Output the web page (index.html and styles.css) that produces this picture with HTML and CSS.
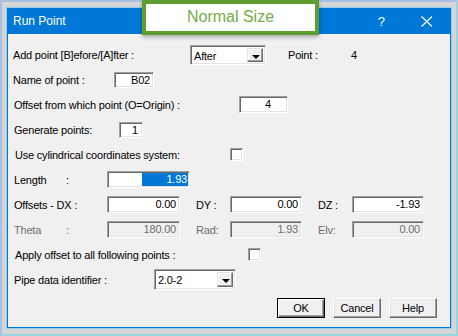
FILE: index.html
```html
<!DOCTYPE html>
<html lang="en">
    <head>
        <meta charset="utf-8">
        <link rel="stylesheet" href="styles.css">
    </head>
    <body>
    <div class="frame">
        <div class="window">
            <div class="titlebar">
                <span class="title">Run Point</span>
                <span class="help-btn">?</span>
                <svg class="close-btn" width="12" height="11" viewBox="0 0 12 11">
                    <path d="M0.5 0.5 L11 10.5 M11 0.5 L0.5 10.5" stroke="#fff" stroke-width="1.2" fill="none"/>
                </svg>
            </div>
            <form class="content">
                <div class="row first">
                    <span class="lbl w-add">Add point [B]efore/[A]fter :</span>
                    <div class="combo w-after"><span class="combo-text">After</span><span class="drop"></span></div>
                    <span class="lbl w-point">Point :</span>
                    <span class="lbl">4</span>
                </div>
                <div class="row first">
                    <span class="lbl w-name">Name of point :</span>
                    <div class="field w-b02 short">B02</div>
                </div>
                <div class="row">
                    <span class="lbl w-offset">Offset from which point (O=Origin) :</span>
                    <div class="field w-four">4</div>
                </div>
                <div class="row">
                    <span class="lbl w-gen">Generate points:</span>
                    <div class="field w-one short">1</div>
                </div>
                <div class="row indent">
                    <span class="lbl w-cyl">Use cylindrical coordinates system:</span>
                    <span class="check"></span>
                </div>
                <div class="row">
                    <span class="lbl w-dx"><span class="word">Length</span>:</span>
                    <div class="field w-len"><span class="sel">1.93</span></div>
                </div>
                <div class="row">
                    <span class="lbl w-dx">Offsets - DX :</span>
                    <div class="field w-num">0.00</div>
                    <span class="lbl w-axis">DY :</span>
                    <div class="field w-num2">0.00</div>
                    <span class="lbl w-axis">DZ :</span>
                    <div class="field w-num2">-1.93</div>
                </div>
                <div class="row off">
                    <span class="lbl w-dx"><span class="word">Theta</span>:</span>
                    <div class="field w-num">180.00</div>
                    <span class="lbl w-axis">Rad:</span>
                    <div class="field w-num2">1.93</div>
                    <span class="lbl w-axis">Elv:</span>
                    <div class="field w-num2">0.00</div>
                </div>
                <div class="row indent">
                    <span class="lbl w-apply">Apply offset to all following points :</span>
                    <span class="check"></span>
                </div>
                <div class="row">
                    <span class="lbl w-pipe">Pipe data identifier :</span>
                    <div class="combo w-pipesel"><span class="combo-text">2.0-2</span><span class="drop"></span></div>
                </div>
                <div class="buttons">
                    <button type="button" class="btn default">OK</button>
                    <button type="button" class="btn">Cancel</button>
                    <button type="button" class="btn">Help</button>
                </div>
            </form>
        </div>
        <div class="badge">Normal Size</div>
    </div>
    </body>
</html>
```

FILE: styles.css
```css
body{
    margin:0;
    font-family:"Liberation Sans", Arial, sans-serif;
}
.frame{
    position:relative;
    width:458px;
    height:336px;
    box-sizing:border-box;
    background:#d6d6d6;
    border:2px solid #a7c1e4;
    border-bottom-color:#9ad3e2;
    border-right-color:#9ad3e2;
    padding:5px 4px;
}
.window{
    margin:1px;
    height:318px;
    border:1px solid #0078d7;
    background:#f0f0f0;
    box-shadow:0 0 0 1px #92cfec;
    display:flex;
    flex-direction:column;
}
.titlebar{
    height:25px;
    background:#0078d7;
    color:#fff;
    display:flex;
    align-items:center;
}
.title{
    font-size:12px;
    margin-left:5px;
    margin-top:-1px;
}
.help-btn{
    font-size:13px;
    margin-left:auto;
    margin-top:-1px;
}
.close-btn{
    margin:0 17px 0 36px;
}
.content{
    margin:0;
    padding:8px 0 0 6px;
    font-size:11px;
    letter-spacing:-0.2px;
    color:#000;
}
.row{
    height:25px;
    display:flex;
    align-items:center;
}
.row.first{
    margin-left:-1px;
}
.row.indent{
    padding-left:1px;
}
.lbl{
    flex:none;
    white-space:nowrap;
}
.word{
    display:inline-block;
    width:52px;
}
.w-add{width:177px;}
.w-point{width:63px;margin-left:22px;}
.w-name{width:101px;}
.w-offset{width:225px;}
.w-gen{width:105px;}
.w-cyl{width:215px;}
.w-dx{width:93px;}
.w-axis{width:34px;margin-left:16px;}
.w-apply{width:233px;}
.w-pipe{width:140px;}

.field{
    box-sizing:border-box;
    height:17px;
    line-height:15px;
    background:#fff;
    border:1px solid;
    border-color:#a0a0a0 #fff #fff #a0a0a0;
    box-shadow:inset 1px 1px #696969, inset -1px -1px #e3e3e3;
    text-align:right;
    padding-right:3px;
    flex:none;
}
.field.short{
    height:16px;
    line-height:14px;
}
.w-b02{width:40px;}
.w-four{width:49px;padding-right:16px;}
.w-one{width:24px;padding-right:4px;}
.w-len{width:83px;padding:1px 1px 1px 0;}
.w-num{width:73px;}
.w-num2{width:72px;}
.sel{
    display:block;
    margin-left:34px;
    height:13px;
    line-height:13px;
    background:#0078d7;
    color:#fff;
    padding-right:1px;
}
.off{
    color:#6d6d6d;
}
.off .field{
    background:#f0f0f0;
    color:#6d6d6d;
}
.check{
    flex:none;
    box-sizing:border-box;
    width:13px;
    height:13px;
    background:#fff;
    border:1px solid;
    border-color:#a0a0a0 #fff #fff #a0a0a0;
    box-shadow:inset 1px 1px #696969, inset -1px -1px #e3e3e3;
}
.combo{
    box-sizing:border-box;
    height:20px;
    background:#fff;
    border:1px solid;
    border-color:#a0a0a0 #fff #fff #a0a0a0;
    box-shadow:inset 1px 1px #696969, inset -1px -1px #e3e3e3;
    display:flex;
    padding:2px;
    flex:none;
}
.w-after{width:76px;}
.w-pipesel{width:82px;height:21px;}
.combo-text{
    flex:1;
    line-height:16px;
    padding-left:1px;
}
.drop{
    width:16px;
    background:#f0f0f0;
    box-sizing:border-box;
    border:1px solid;
    border-color:#e3e3e3 #696969 #696969 #e3e3e3;
    box-shadow:inset -1px -1px #a0a0a0, inset 1px 1px #fff;
    position:relative;
}
.drop::after{
    content:"";
    position:absolute;
    left:4px;
    top:6px;
    border:4px solid transparent;
    border-top:4px solid #000;
    border-bottom:0;
}
.buttons{
    display:flex;
    gap:8px;
    margin:6px 0 0 263px;
}
.btn{
    width:48px;
    height:20px;
    padding:0;
    font-family:"Liberation Sans", Arial, sans-serif;
    font-size:11px;
    letter-spacing:-0.2px;
    color:#000;
    background:#f0f0f0;
    border:1px solid;
    border-color:#fff #696969 #696969 #fff;
    box-shadow:inset -1px -1px #a0a0a0, inset 1px 1px #e3e3e3;
}
.btn.default{
    border-color:#000;
    box-shadow:inset 1px 1px #fff, inset -1px -1px #696969, inset -2px -2px #a0a0a0;
}
.badge{
    position:absolute;
    left:140px;
    top:-2px;
    width:177px;
    height:35px;
    box-sizing:border-box;
    border:4px solid #5e9e2f;
    background:#fff;
    color:#72ae48;
    font-size:16px;
    text-align:center;
    line-height:26px;
    box-shadow:0 2px 4px rgba(0,0,0,0.3);
}
```
